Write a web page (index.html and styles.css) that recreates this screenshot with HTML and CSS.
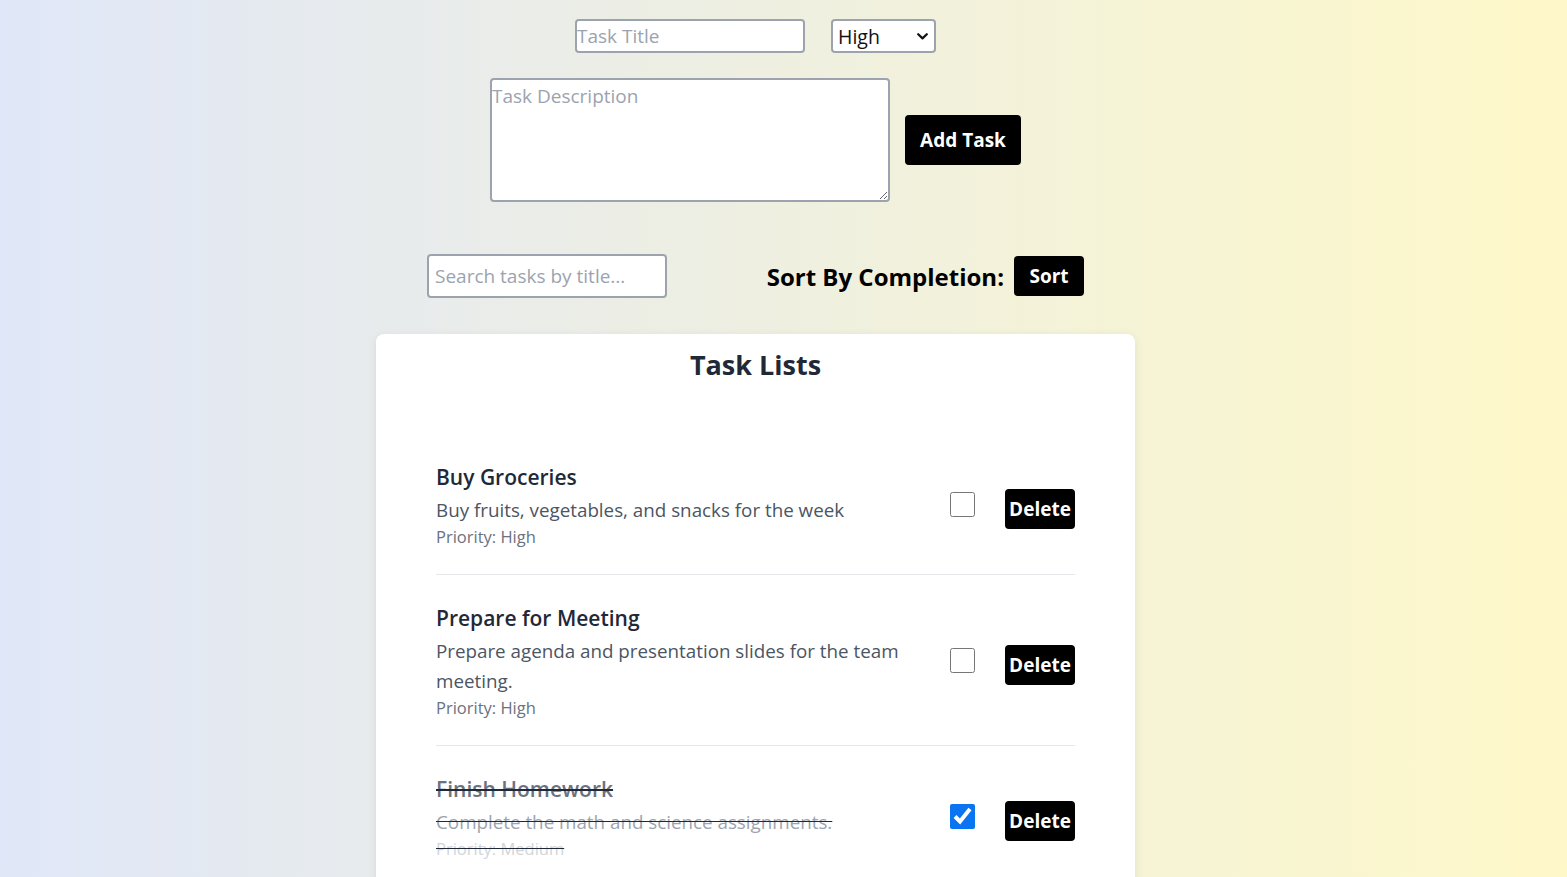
FILE: index.html
```html
<!DOCTYPE html>
<html lang="en">
<head>
<meta charset="utf-8">
<title>Task Manager</title>
<link rel="stylesheet" href="styles.css">
</head>
<body>
<main class="app">
  <form class="task-form">
    <div class="form-row">
      <input class="title-input" type="text" placeholder="Task Title">
      <div class="select-wrap">
        <select class="priority-select">
          <option>High</option>
          <option>Medium</option>
          <option>Low</option>
        </select>
        <svg class="select-chevron" width="11" height="7" viewBox="0 0 11 7" aria-hidden="true">
          <path d="M1.2 1.2 L5.5 5.4 L9.8 1.2" fill="none" stroke="#111" stroke-width="2.2" stroke-linecap="round" stroke-linejoin="round"/>
        </svg>
      </div>
    </div>
    <div class="form-row desc-row">
      <textarea class="desc-input" placeholder="Task Description"></textarea>
      <button type="button" class="btn btn-add">Add Task</button>
    </div>
  </form>

  <div class="toolbar">
    <input class="search-input" type="text" placeholder="Search tasks by title...">
    <div class="sort-group">
      <span class="sort-label">Sort By Completion:</span>
      <button type="button" class="btn btn-sort">Sort</button>
    </div>
  </div>

  <section class="card">
    <h2 class="card-title">Task Lists</h2>
    <ul class="task-list">
      <li class="task">
        <div class="task-text">
          <h3 class="task-name">Buy Groceries</h3>
          <p class="task-desc">Buy fruits, vegetables, and snacks for the week</p>
          <p class="task-priority">Priority: High</p>
        </div>
        <input class="task-check" type="checkbox">
        <button type="button" class="btn btn-delete">Delete</button>
      </li>
      <li class="task">
        <div class="task-text">
          <h3 class="task-name">Prepare for Meeting</h3>
          <p class="task-desc">Prepare agenda and presentation slides for the team meeting.</p>
          <p class="task-priority">Priority: High</p>
        </div>
        <input class="task-check" type="checkbox">
        <button type="button" class="btn btn-delete">Delete</button>
      </li>
      <li class="task done">
        <div class="task-text">
          <h3 class="task-name">Finish Homework</h3>
          <p class="task-desc">Complete the math and science assignments.</p>
          <p class="task-priority">Priority: Medium</p>
        </div>
        <input class="task-check" type="checkbox" checked>
        <button type="button" class="btn btn-delete">Delete</button>
      </li>
    </ul>
  </section>
</main>
</body>
</html>
```

FILE: styles.css
```css
* { box-sizing: border-box; }

html, body { height: 100%; }

body {
  margin: 0;
  font-family: "Open Sans", Lato, sans-serif;
  background: linear-gradient(to right, #e0e7f8, #fef8c9);
  color: #1f2937;
  overflow: hidden;
}

.app {
  width: 759px;
  margin-left: calc(50% - 407.5px);
  padding-top: 19px;
}

.task-form {
  display: flex;
  flex-direction: column;
  align-items: center;
}

.form-row {
  display: flex;
  align-items: center;
  gap: 26px;
  height: 34px;
}

.desc-row {
  margin-top: 25px;
  gap: 15px;
  height: 124px;
}

input, select, textarea, button {
  font-family: inherit;
}

.title-input {
  width: 230px;
  height: 34px;
  border: 2px solid #9ca3af;
  border-radius: 4px;
  padding: 0;
  font-size: 19px;
  background: #fff;
  outline: none;
}

.title-input::placeholder,
.desc-input::placeholder,
.search-input::placeholder {
  color: #9ca3af;
}

.select-wrap {
  position: relative;
  width: 105px;
  height: 34px;
}

.priority-select {
  appearance: none;
  -webkit-appearance: none;
  width: 105px;
  height: 34px;
  border: 2px solid #9ca3af;
  border-radius: 4px;
  font-size: 19.5px;
  color: #111;
  background: #fff;
  padding: 0 24px 0 5px;
  outline: none;
}

.select-chevron {
  position: absolute;
  right: 8px;
  top: 14px;
  pointer-events: none;
}

.desc-input {
  width: 400px;
  height: 124px;
  border: 2px solid #9ca3af;
  border-radius: 4px;
  padding: 0;
  font-size: 19px;
  line-height: 32px;
  background: #fff;
  outline: none;
  resize: both;
}

.btn {
  background: #000;
  color: #fff;
  border: none;
  border-radius: 4px;
  font-weight: 700;
  font-size: 19px;
  cursor: pointer;
  padding: 0;
}

.btn-add {
  width: 116px;
  height: 50px;
}

.toolbar {
  width: 657px;
  margin: 52px auto 0;
  display: flex;
  justify-content: space-between;
  align-items: center;
}

.search-input {
  width: 240px;
  height: 44px;
  border: 2px solid #9ca3af;
  border-radius: 4px;
  padding: 0 6px;
  font-size: 19px;
  background: #fff;
  outline: none;
}

.sort-group {
  display: flex;
  align-items: center;
  gap: 10px;
}

.sort-label {
  font-size: 24px;
  font-weight: 700;
  color: #000;
}

.btn-sort {
  width: 70px;
  height: 40px;
}

.card {
  margin-top: 36px;
  background: #fff;
  border-radius: 8px;
  box-shadow: 0 2px 8px rgba(0, 0, 0, 0.08);
  padding: 12px 60px 40px;
  min-height: 700px;
}

.card-title {
  margin: 0;
  text-align: center;
  font-size: 27px;
  line-height: 38px;
  font-weight: 700;
  color: #1f2937;
}

.task-list {
  list-style: none;
  margin: 50px 0 0;
  padding: 0;
}

.task {
  display: flex;
  align-items: center;
  padding: 25px 0;
  border-bottom: 1px solid #e5e7eb;
}

.task-text {
  width: 490px;
  margin-right: 24px;
}

.task-name {
  margin: 0;
  font-size: 21px;
  line-height: 36px;
  font-weight: 600;
  color: #1f2937;
}

.task-desc {
  margin: 0;
  font-size: 18.8px;
  line-height: 30px;
  color: #4b5563;
}

.task-priority {
  margin: 0;
  font-size: 16.5px;
  line-height: 24px;
  color: #6b7280;
}

.task-check {
  width: 25px;
  height: 25px;
  margin: 0 30px 0 0;
  accent-color: #0b74f0;
}

.btn-delete {
  width: 70px;
  height: 40px;
  margin-top: 9px;
}

.done .task-text { text-decoration: line-through; }
.done .task-name { color: #6b7280; }
.done .task-desc { color: #9ca3af; }
.done .task-priority { color: #d1d5db; }
```
